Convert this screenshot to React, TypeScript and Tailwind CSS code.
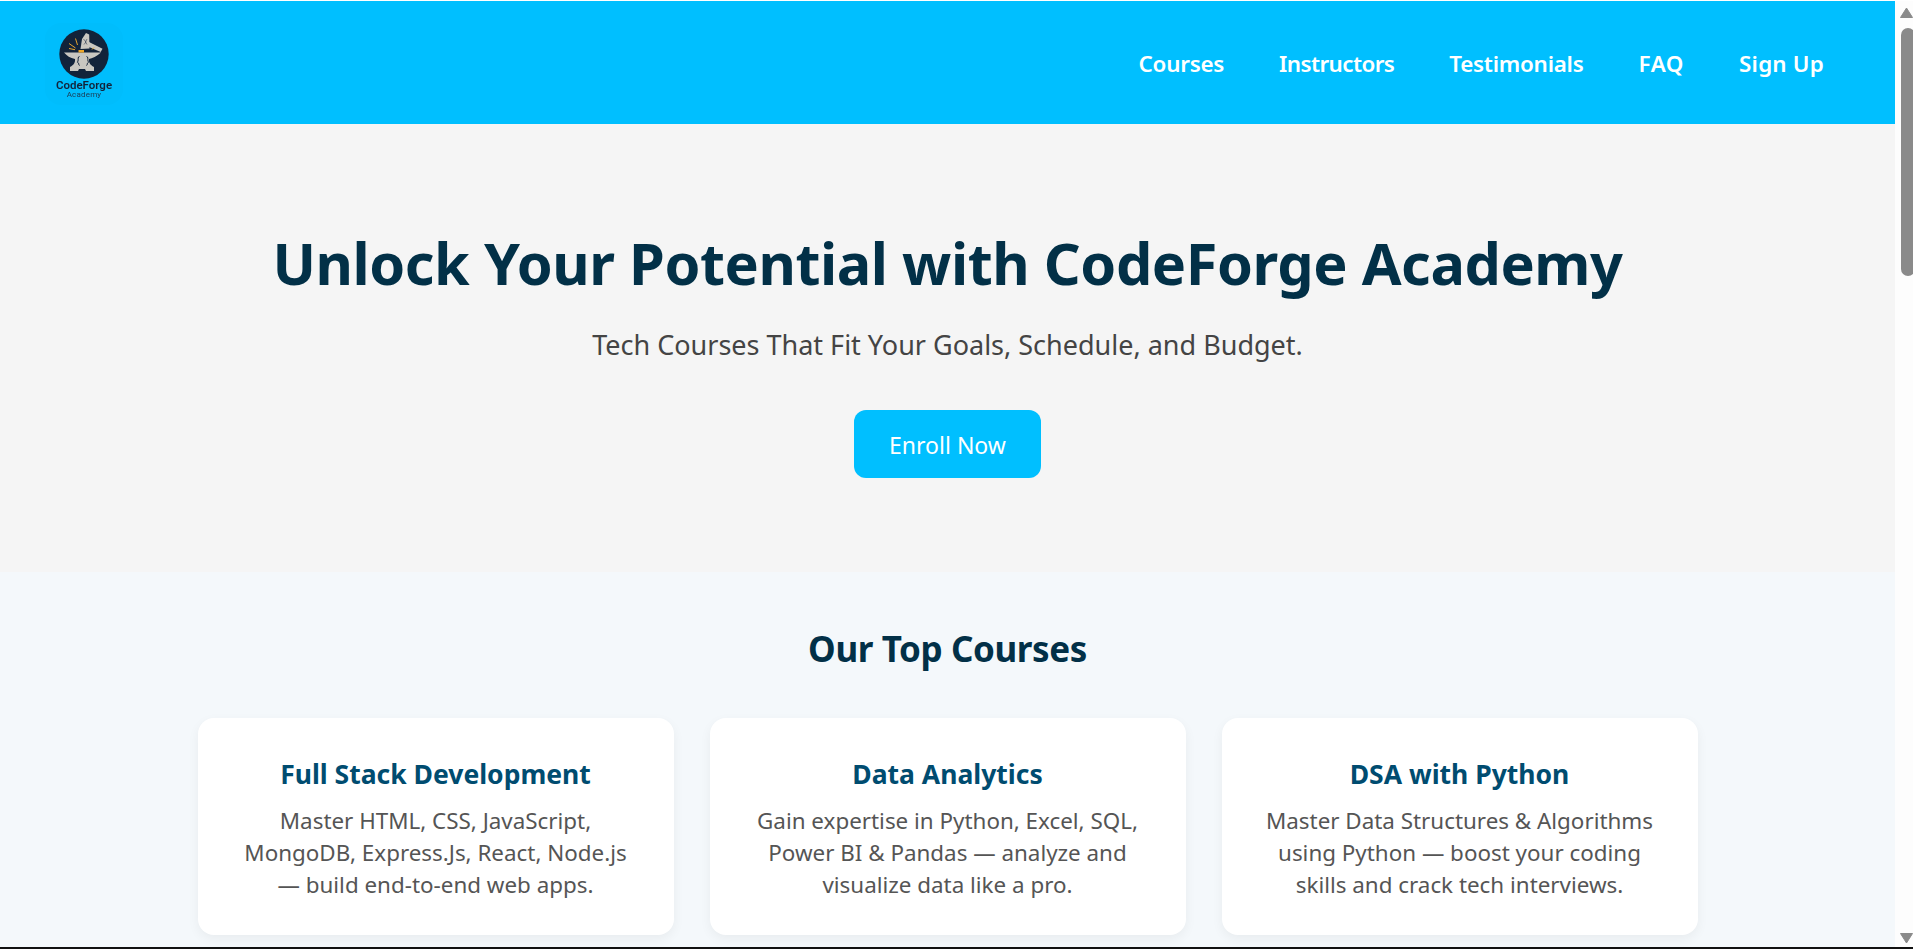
const font = { fontFamily: '"Noto Sans", "Open Sans", sans-serif' };

function Logo() {
  return (
    <div className="mt-[3px] flex h-[82px] w-[78px] flex-col items-center rounded-2xl bg-[#00bdfc] pt-[6px] blur-[0.4px]">
      <svg width="50" height="50" viewBox="0 0 50 50" className="shrink-0" aria-hidden="true">
        <circle cx="25" cy="25" r="24.700" fill="#12233a" />
        <path d="M30 13l13.500 6.700-1.800 3.300L30 18z" fill="#c9c7c1" />
        <path d="M27 4l3.200 1.600.3 14-9 .4 1.500-10z" fill="#c9c7c1" />
        <path d="M24.500 10l2.500 3-2 2.500M28 10l-1.500 3 1.500 2.500" stroke="#12233a" strokeWidth="0.500" fill="none" />
        <path d="M5 23.500H42C38 27 33 29.500 30 30c-.5 3 1 6 5 8v4H27l-1-2H20l-1 2H11V38c4-2 5.500-5 5-8-5-1-8-3-11-6.500z" fill="#c9c7c1" />
        <rect x="19.500" y="21" width="5.500" height="2.500" fill="#f0a828" />
        <path d="M10 14.500l6.500 4.500M16.500 9.500l2 6.500M10 19.500l6 1.200M33 20.500l2-2" stroke="#e6a32e" strokeWidth="1" fill="none" />
        <path d="M20.500 27.500c-2 0-1 3-1.500 4.500s-1 1 0 1.500 .5 3 1.500 3M27.500 27.500c2 0 1 3 1.500 4.500s1 1 0 1.500-.5 3-1.500 3" stroke="#12233a" strokeWidth="1" fill="none" />
      </svg>
      <span className="mt-px text-[11.500px] leading-[11px] font-semibold text-[#12233a]" style={{ fontFamily: 'Roboto, sans-serif' }}>CodeForge</span>
      <span className="-mt-px text-[8px] leading-[9px] tracking-[0.2px] text-[#1d3a52]" style={{ fontFamily: 'Roboto, sans-serif' }}>Academy</span>
    </div>
  );
}

const nav = [
  { n: 'Courses', c: 'tracking-[-0.25px]' },
  { n: 'Instructors', c: 'tracking-[-0.58px]' },
  { n: 'Testimonials', c: 'tracking-[-0.25px]' },
  { n: 'FAQ', c: 'tracking-[0.6px]' },
  { n: 'Sign Up', c: 'tracking-[0.2px]' },
];

const courses = [
  { t: 'Full Stack Development', l: ['Master HTML, CSS, JavaScript,', 'MongoDB, Express.Js, React, Node.js', '— build end-to-end web apps.'] },
  { t: 'Data Analytics', l: ['Gain expertise in Python, Excel, SQL,', 'Power BI & Pandas — analyze and', 'visualize data like a pro.'] },
  { t: 'DSA with Python', l: ['Master Data Structures & Algorithms', 'using Python — boost your coding', 'skills and crack tech interviews.'] },
];

export default function App() {
  return (
    <div className="flex h-[949px] w-[1913px] flex-col overflow-hidden bg-white" style={font}>
      <div className="flex min-h-0 flex-1 pt-px">
        <main className="flex w-[1895px] flex-col">
          <header className="flex h-[123px] items-center justify-between bg-[#00bfff] pr-[71px] pl-[45px]">
            <Logo />
            <nav className="flex gap-[55px] pt-[2px] text-[22.400px] font-semibold text-white">
              {nav.map((i) => <a key={i.n} className={i.c}>{i.n}</a>)}
            </nav>
          </header>
          <section className="flex h-[448px] flex-col items-center bg-[#f5f5f5] pt-[99px]">
            <h1 className="text-[57.600px] leading-[80px] font-bold tracking-[-0.44px] text-[#023047]">Unlock Your Potential with CodeForge Academy</h1>
            <p className="mt-[24px] text-[27px] leading-[36px] text-[#444444]">Tech Courses That Fit Your Goals, Schedule, and Budget.</p>
            <button className="mt-[47px] h-[68px] w-[187px] rounded-xl bg-[#00bfff] pt-[2px] text-[23px] text-white">Enroll Now</button>
          </section>
          <section className="flex flex-1 flex-col items-center bg-[#f4f8fb] pt-[52px]">
            <h2 className="text-[35px] leading-[50px] font-bold tracking-[-0.4px] text-[#023047]">Our Top Courses</h2>
            <div className="mt-[44px] flex gap-[36px]">
              {courses.map((c) => (
                <article key={c.t} className="flex h-[217px] w-[476px] flex-col items-center rounded-2xl bg-white pt-[38px] shadow-[0_4px_12px_rgba(0,0,0,0.05)]">
                  <h3 className="text-[26.500px] leading-[36px] font-bold text-[#004c70]">{c.t}</h3>
                  <p className="mt-[13px] text-center text-[22.400px] leading-[32px] text-[#555555]">
                    {c.l.map((x) => <span key={x} className="block">{x}</span>)}
                  </p>
                </article>
              ))}
            </div>
          </section>
        </main>
        <aside className="flex w-[18px] flex-col items-start bg-[#fdfdfd] pl-[5px]">
          <svg width="13" height="11" viewBox="0 0 13 11" className="mt-[6px] shrink-0" aria-hidden="true"><path d="M6.500 1L12.500 10.500H.5z" fill="#8a8a8a" stroke="#8a8a8a" strokeLinejoin="round" /></svg>
          <div className="mt-[10px] ml-px h-[248px] w-[14px] shrink-0 rounded-full bg-[#8a8a8a]" />
          <div className="flex-1" />
          <svg width="13" height="11" viewBox="0 0 13 11" className="mb-[3px] shrink-0" aria-hidden="true"><path d="M6.500 10L12.500 .5H.5z" fill="#8a8a8a" stroke="#8a8a8a" strokeLinejoin="round" /></svg>
        </aside>
      </div>
      <div className="h-[2px] shrink-0 bg-[#111111]" />
    </div>
  );
}
